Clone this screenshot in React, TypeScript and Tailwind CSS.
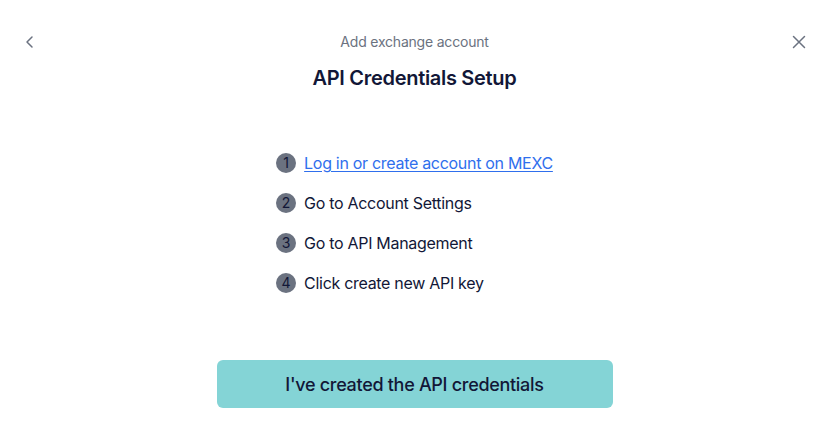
import React from "react";

const steps = [
  { n: 1, text: "Log in or create account on MEXC", link: true },
  { n: 2, text: "Go to Account Settings" },
  { n: 3, text: "Go to API Management" },
  { n: 4, text: "Click create new API key" },
];

export default function App() {
  return (
    <div
      className="w-[829px] h-[430px] bg-white flex flex-col items-center relative"
      style={{ fontFamily: '"Inter", "Noto Sans", sans-serif' }}
    >
      <div className="w-full flex items-start justify-between px-[22px] pt-[32px]">
        <button className="w-[16px] h-[20px] flex items-center justify-center text-[#6b7280]">
          <svg width="14" height="14" viewBox="0 0 14 14" fill="none" stroke="currentColor" strokeWidth="1.5" strokeLinecap="round" strokeLinejoin="round">
            <path d="M9 2L4 7l5 5" />
          </svg>
        </button>
        <div className="flex flex-col items-center">
          <div className="text-[14px] leading-[20px] text-[#6b7280] tracking-[-0.2px]">Add exchange account</div>
          <div className="mt-[12px] text-[20px] leading-[28px] font-semibold text-[#121737] tracking-[-0.3px]">API Credentials Setup</div>
        </div>
        <button className="w-[16px] h-[20px] flex items-center justify-center text-[#6b7280]">
          <svg width="14" height="14" viewBox="0 0 14 14" fill="none" stroke="currentColor" strokeWidth="1.5" strokeLinecap="round">
            <path d="M1.5 1.5l11 11M12.5 1.5l-11 11" />
          </svg>
        </button>
      </div>

      <div className="mt-[59px] flex flex-col gap-[16px]">
        {steps.map((s) => (
          <div key={s.n} className="flex items-center gap-[8px] h-[24px]">
            <div className="w-[20px] h-[20px] rounded-full bg-[#6b7280] flex items-center justify-center text-[14px] text-[#121737] leading-none">
              {s.n}
            </div>
            {s.link ? (
              <a href="#" className="text-[16px] text-[#2f6fed] underline underline-offset-2 tracking-[-0.3px]">
                {s.text}
              </a>
            ) : (
              <span className="text-[16px] text-[#121737] tracking-[-0.3px]">{s.text}</span>
            )}
          </div>
        ))}
      </div>

      <button className="mt-[65px] w-[396px] h-[48px] rounded-[6px] bg-[#84d4d6] text-[18px] font-medium text-[#121737] tracking-[-0.3px]">
        I've created the API credentials
      </button>
    </div>
  );
}
